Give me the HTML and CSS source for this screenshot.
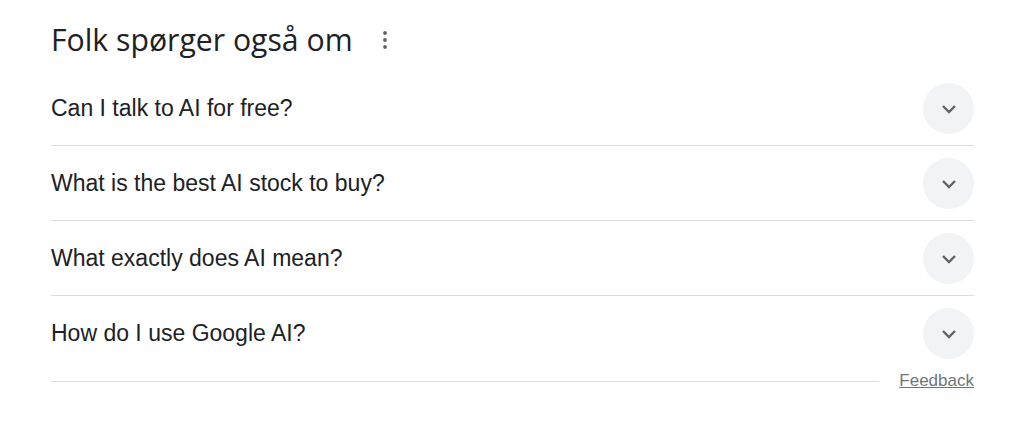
FILE: index.html
```html
<!DOCTYPE html>
<html lang="da">
<head>
<meta charset="utf-8">
<link rel="stylesheet" href="styles.css">
</head>
<body>
<div class="paa">
  <div class="paa-head">
    <h2 class="paa-title">Folk spørger også om</h2>
    <span class="paa-menu" aria-hidden="true">
      <svg width="6" height="20" viewBox="0 0 6 20"><circle cx="3" cy="3" r="1.9" fill="#5f6368"/><circle cx="3" cy="10" r="1.9" fill="#5f6368"/><circle cx="3" cy="17" r="1.9" fill="#5f6368"/></svg>
    </span>
  </div>
  <div class="paa-list">
    <div class="paa-row">
      <span class="paa-q">Can I talk to AI for free?</span>
      <span class="paa-btn"><svg width="16" height="10" viewBox="0 0 16 10"><path d="M2 2 L8 8 L14 2" fill="none" stroke="#5f6368" stroke-width="2.4"/></svg></span>
    </div>
    <div class="paa-row">
      <span class="paa-q">What is the best AI stock to buy?</span>
      <span class="paa-btn"><svg width="16" height="10" viewBox="0 0 16 10"><path d="M2 2 L8 8 L14 2" fill="none" stroke="#5f6368" stroke-width="2.4"/></svg></span>
    </div>
    <div class="paa-row">
      <span class="paa-q">What exactly does AI mean?</span>
      <span class="paa-btn"><svg width="16" height="10" viewBox="0 0 16 10"><path d="M2 2 L8 8 L14 2" fill="none" stroke="#5f6368" stroke-width="2.4"/></svg></span>
    </div>
    <div class="paa-row">
      <span class="paa-q">How do I use Google AI?</span>
      <span class="paa-btn"><svg width="16" height="10" viewBox="0 0 16 10"><path d="M2 2 L8 8 L14 2" fill="none" stroke="#5f6368" stroke-width="2.4"/></svg></span>
    </div>
  </div>
  <div class="paa-foot">
    <span class="paa-line"></span>
    <a class="paa-feedback" href="#">Feedback</a>
  </div>
</div>
</body>
</html>
```
FILE: styles.css
```css
html, body {
  margin: 0;
  padding: 0;
  background: #fff;
}
body {
  font-family: "Liberation Sans", Arial, sans-serif;
  color: #202124;
}
.paa {
  width: 923px;
  margin-left: 51px;
}
.paa-head {
  display: flex;
  align-items: center;
  height: 71px;
  padding-top: 8px;
  box-sizing: border-box;
}
.paa-title {
  margin: 0;
  font-family: "Open Sans", Roboto, sans-serif;
  font-weight: 400;
  font-size: 30.2px;
  line-height: 34px;
  color: #202124;
}
.paa-menu {
  display: flex;
  margin-left: 29px;
}
.paa-row {
  display: flex;
  align-items: center;
  justify-content: space-between;
  height: 75px;
  box-sizing: border-box;
  border-bottom: 1px solid #dadce0;
}
.paa-row:last-child {
  border-bottom: none;
  height: 74px;
}
.paa-q {
  font-size: 23px;
  line-height: 28px;
  color: #202124;
}
.paa-btn {
  width: 51px;
  height: 51px;
  border-radius: 50%;
  background: #f1f3f4;
  display: flex;
  align-items: center;
  justify-content: center;
  margin-top: 1px;
}
.paa-foot {
  display: flex;
  align-items: center;
  height: 22px;
}
.paa-line {
  flex: 1;
  height: 1px;
  background: #dadce0;
  margin-right: 20px;
}
.paa-feedback {
  font-size: 17px;
  line-height: 22px;
  color: #70757a;
  text-decoration: underline;
}
```
